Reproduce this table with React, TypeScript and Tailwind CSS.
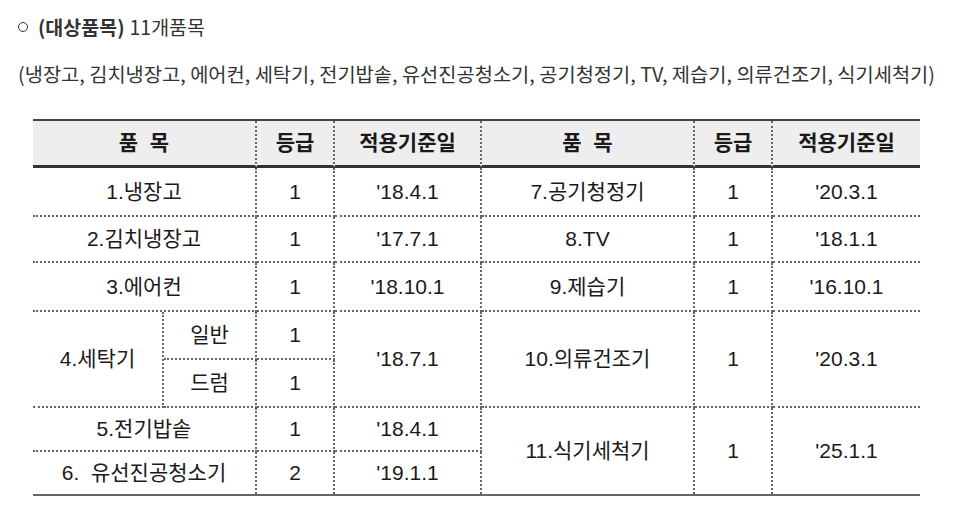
import React from "react";

const tf = { fontFamily: '"Liberation Sans", "Noto Sans CJK KR", sans-serif' };

const dotB = "border-b-2 border-dotted border-b-[#666]";
const dotR = "border-r-2 border-dotted border-r-[#666]";
const hdr = "bg-[#eeeeee] font-bold border-b-[3px] border-b-[#333] [border-bottom-style:solid]";

function Cell({ className = "", children }: { className?: string; children?: React.ReactNode }) {
  return (
    <div className={`flex items-center justify-center text-[21px] text-[#1a1a1a] ${className}`}>
      {children}
    </div>
  );
}

export default function App() {
  return (
    <div className="w-[960px] h-[530px] bg-white overflow-hidden" style={{ fontFamily: '"Noto Sans CJK KR", sans-serif' }}>
      <div className="pl-[18px] pt-[13px] text-[19.5px] text-[#333] leading-[28px]">
        <div className="flex items-center">
          <span className="inline-block w-[10px] h-[10px] rounded-full border-[1.5px] border-[#333] mr-[10px]"></span>
          <span className="font-bold">(대상품목)</span>
          <span className="ml-[5px]">11개품목</span>
        </div>
        <div className="mt-[19px] text-[19.8px]">
          (냉장고, 김치냉장고, 에어컨, 세탁기, 전기밥솥, 유선진공청소기, 공기청정기, TV, 제습기, 의류건조기, 식기세척기)
        </div>
      </div>

      <div className="ml-[33px] mt-[31px] w-[887px] border-t-2 border-t-[#444] border-b-2 border-b-[#666]" style={tf}>
        <div className="grid grid-cols-[131px_93px_78px_147px_213px_78px_147px] grid-rows-[47px_49px_46px_49px_48px_48px_44px_42px]">
          {/* header */}
          <Cell className={`col-span-2 ${hdr} ${dotR}`}><span className="whitespace-pre">품  목</span></Cell>
          <Cell className={`${hdr} ${dotR}`}>등급</Cell>
          <Cell className={`${hdr} ${dotR}`}>적용기준일</Cell>
          <Cell className={`${hdr} ${dotR}`}><span className="whitespace-pre">품  목</span></Cell>
          <Cell className={`${hdr} ${dotR}`}>등급</Cell>
          <Cell className={hdr}>적용기준일</Cell>

          {/* row 1 */}
          <Cell className={`col-span-2 ${dotB} ${dotR}`}>1.냉장고</Cell>
          <Cell className={`${dotB} ${dotR}`}>1</Cell>
          <Cell className={`${dotB} ${dotR}`}>'18.4.1</Cell>
          <Cell className={`${dotB} ${dotR}`}>7.공기청정기</Cell>
          <Cell className={`${dotB} ${dotR}`}>1</Cell>
          <Cell className={dotB}>'20.3.1</Cell>

          {/* row 2 */}
          <Cell className={`col-span-2 ${dotB} ${dotR}`}>2.김치냉장고</Cell>
          <Cell className={`${dotB} ${dotR}`}>1</Cell>
          <Cell className={`${dotB} ${dotR}`}>'17.7.1</Cell>
          <Cell className={`${dotB} ${dotR}`}>8.TV</Cell>
          <Cell className={`${dotB} ${dotR}`}>1</Cell>
          <Cell className={dotB}>'18.1.1</Cell>

          {/* row 3 */}
          <Cell className={`col-span-2 ${dotB} ${dotR}`}>3.에어컨</Cell>
          <Cell className={`${dotB} ${dotR}`}>1</Cell>
          <Cell className={`${dotB} ${dotR}`}>'18.10.1</Cell>
          <Cell className={`${dotB} ${dotR}`}>9.제습기</Cell>
          <Cell className={`${dotB} ${dotR}`}>1</Cell>
          <Cell className={dotB}>'16.10.1</Cell>

          {/* row 4 (washing machine) */}
          <Cell className={`row-span-2 ${dotB} ${dotR}`}>4.세탁기</Cell>
          <Cell className={`${dotB} ${dotR}`}>일반</Cell>
          <Cell className={`${dotB} ${dotR}`}>1</Cell>
          <Cell className={`row-span-2 ${dotB} ${dotR}`}>'18.7.1</Cell>
          <Cell className={`row-span-2 ${dotB} ${dotR}`}>10.의류건조기</Cell>
          <Cell className={`row-span-2 ${dotB} ${dotR}`}>1</Cell>
          <Cell className={`row-span-2 ${dotB}`}>'20.3.1</Cell>
          <Cell className={`col-start-2 row-start-6 ${dotB} ${dotR}`}>드럼</Cell>
          <Cell className={`col-start-3 row-start-6 ${dotB} ${dotR}`}>1</Cell>

          {/* row 5 */}
          <Cell className={`col-span-2 ${dotB} ${dotR}`}>5.전기밥솥</Cell>
          <Cell className={`${dotB} ${dotR}`}>1</Cell>
          <Cell className={`${dotB} ${dotR}`}>'18.4.1</Cell>
          <Cell className={`row-span-2 ${dotR}`}>11.식기세척기</Cell>
          <Cell className={`row-span-2 ${dotR}`}>1</Cell>
          <Cell className="row-span-2">'25.1.1</Cell>

          {/* row 6 */}
          <Cell className={`col-span-2 col-start-1 row-start-8 ${dotR}`}><span className="whitespace-pre">6.  유선진공청소기</span></Cell>
          <Cell className={`col-start-3 row-start-8 ${dotR}`}>2</Cell>
          <Cell className={`col-start-4 row-start-8 ${dotR}`}>'19.1.1</Cell>
        </div>
      </div>
    </div>
  );
}
